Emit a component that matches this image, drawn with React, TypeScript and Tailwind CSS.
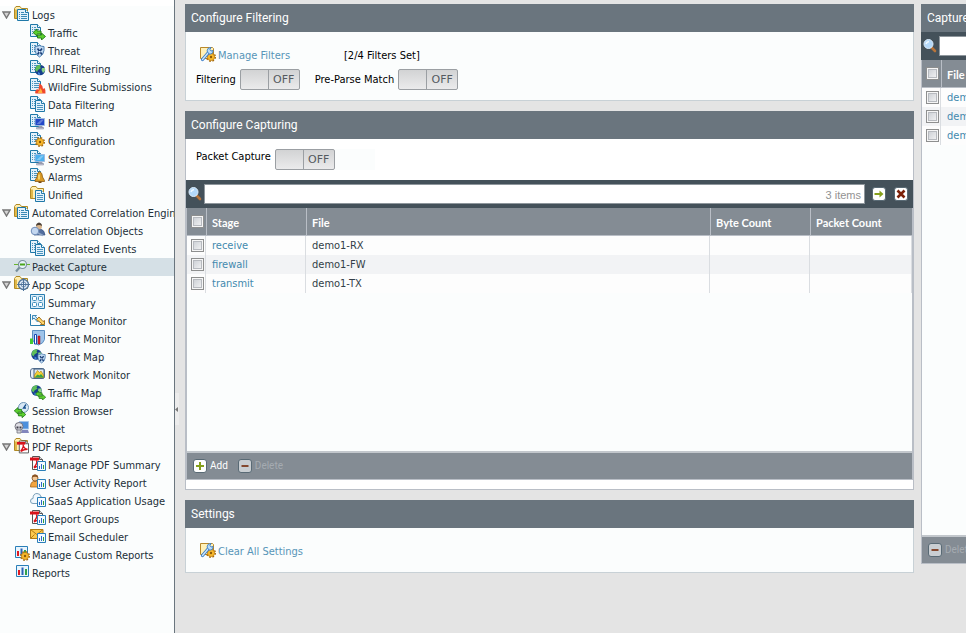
import { useState, type ReactNode } from "react";

const bodyFont = "font-['DejaVu_Sans_Condensed','DejaVu_Sans',sans-serif]";
const titleFont = "font-['Roboto',sans-serif]";

/* ---------- icon parts, all drawn on a 16x16 grid ---------- */

const BackDoc = () => (
  <g>
    <path d="M.5 .5h7l3 3v9h-10z" fill="#e3f1fa" stroke="#1f78a8" />
    <path d="M7.5 .5v3h3" fill="#fff" stroke="#1f78a8" />
    <path d="M2 3.500h1M4 3.500h2M2 5.500h1M4 5.500h5M2 7.500h1M4 7.500h5M2 9.500h1M4 9.500h5" stroke="#4a94be" />
  </g>
);

const FrontDoc = () => (
  <g>
    <path d="M5.500 4.500h6l3 3v8h-9z" fill="#e3f1fb" stroke="#1f78a8" />
    <path d="M11.500 4.500v3h3" fill="#fff" stroke="#1f78a8" />
    <path d="M7 7.500h3M7 9.500h6M7 11.500h6M7 13.500h6" stroke="#4a94be" />
  </g>
);

const Folder = () => (
  <g>
    <path d="M.5 12.500v-10l1.500-2h4l1.500 2h6v10z" fill="#ffeeb0" stroke="#b08a25" />
    <path d="M2 12V3.500" stroke="#e0b84a" strokeWidth="2" />
  </g>
);

const WideDoc = () => (
  <g>
    <path d="M3.500 3.500h8l3 3v8h-11z" fill="#e3f1fb" stroke="#1f78a8" />
    <path d="M11.500 3.500v3h3" fill="#fff" stroke="#1f78a8" />
    <path d="M5 6.500h1M7 6.500h3M5 8.500h1M7 8.500h6M5 10.500h1M7 10.500h6M5 12.500h1M7 12.500h6" stroke="#3b8ab5" />
  </g>
);

const GreenArrows = () => (
  <g fill="#5ccf2f" stroke="#217a16" strokeWidth=".9">
    <path d="M3 8.500l4-3.500v2h4v3H7v2z" />
    <path d="M15.500 12.500l-4-3.500v2h-4v3h4v2z" />
  </g>
);

const Shield = () => (
  <g>
    <path d="M5 4.500q2.500 0 4.500-1 2 1 4.500 1v4q-.5 4.500-4.500 6.500-4-2-4.500-6.500z" fill="#c2dbf3" stroke="#4d7fb0" />
    <path d="M7.500 6.500l4.500 6M12 6.500l-4.500 6" stroke="#1b3f78" strokeWidth="1.700" />
    <path d="M9 9h1.500v1.500H9z" fill="#eaf4ff" />
  </g>
);

const Globe = () => (
  <g>
    <circle cx="10" cy="10" r="5.200" fill="#173f8c" />
    <path d="M6 6.500q3-2.500 5-1.500l-1 2 1 1-3 2-1 2-2-2z" fill="#5fbf58" />
    <path d="M12 8l3 0v3l-2 2-1.500-3z" fill="#8bd487" />
    <path d="M8 12l2 1v2l-2-.5z" fill="#3d83d8" />
  </g>
);

const Flame = () => (
  <g>
    <path d="M5 14q1-2 2-3l1.500 1 1-7q3 2 3.500 6l1.500-1q1.500 2 1 5.500H5.500z" fill="#f0482c" />
    <path d="M8 15q0-2 1.500-2.500l.5-2.500q2.500 2 2.500 5z" fill="#ffb13b" />
  </g>
);

const Monitor = ({ color }: { color: string }) => (
  <g>
    <path d="M5 4.500h9.500v7H5z" fill={color} stroke="#9dbbe0" />
    <path d="M9 12h3l1.500 2h-6z" fill="#9a9cb0" />
    <path d="M6.500 13.500h7v1.500h-7z" fill="#c5c8d8" stroke="#7e8298" strokeWidth=".5" />
    <path d="M6.500 10l5-4.500h2.500L10 10z" fill="#fff" opacity=".3" />
  </g>
);

const Gear = () => (
  <g>
    <circle cx="10" cy="10" r="4.200" fill="none" stroke="#a56a0c" strokeWidth="1.600" strokeDasharray="1.700 1.600" />
    <circle cx="10" cy="10" r="3.600" fill="#f9b92c" stroke="#b9770f" strokeWidth=".7" />
    <circle cx="10" cy="10" r="1.200" fill="#8d5a08" />
  </g>
);

const Bell = () => (
  <g>
    <path d="M9.500 3.500q3 1 3 5.500l2 3.500v1H5v-1L7 9q0-4.500 2.500-5.500z" fill="#d99a25" stroke="#8c5a12" strokeWidth=".8" />
    <path d="M9 6.500v5" stroke="#ffe07d" strokeWidth="1.500" />
    <path d="M8.500 13.500h3V15h-3z" fill="#7b4a0d" />
  </g>
);

const PdfPage = () => (
  <g>
    <path d="M2.500 .5h7l3 3v10h-10z" fill="#fff" stroke="#555" />
    <path d="M9.500 .5v3h3" fill="#ddd" stroke="#555" />
    <path d="M0 1.500h9v3H0z" fill="#d8121b" />
    <path d="M4 11.500q4-5 2.500-7 1 5 5 5-4 0-7.500 2.500" fill="none" stroke="#d8121b" strokeWidth="1.500" />
  </g>
);

const MiniChart = () => (
  <g>
    <path d="M7.500 5.500h8v9h-8z" fill="#f4faff" stroke="#2a7fb8" />
    <path d="M9.500 13v-3" stroke="#2b69c9" />
    <path d="M11.500 13V8" stroke="#2b69c9" />
    <path d="M13.500 13V9" stroke="#2f9e3f" />
  </g>
);

const ChartFrame = () => (
  <g>
    <path d="M1.500 2.500h12v11h-12z" fill="#e9f5fd" stroke="#2a7fb8" />
    <path d="M3 7h2v5H3z" fill="#e01b22" />
    <path d="M6.500 4.500h2V12h-2z" fill="#2b62b5" />
    <path d="M10 6h2v6h-2z" fill="#34a348" />
  </g>
);

const icons: Record<string, ReactNode> = {
  logs: <><Folder /><WideDoc /></>,
  traffic: <><BackDoc /><GreenArrows /></>,
  threat: <><BackDoc /><Shield /></>,
  url: <><BackDoc /><Globe /></>,
  wildfire: <><BackDoc /><Flame /></>,
  data: <><BackDoc /><FrontDoc /></>,
  hip: <><BackDoc /><Monitor color="#2348c8" /></>,
  config: <><BackDoc /><Gear /></>,
  system: <><BackDoc /><Monitor color="#4bb0ee" /></>,
  alarms: <><BackDoc /><Bell /></>,
  unified: <><Folder /><FrontDoc /></>,
  objects: (
    <>
      <path d="M4 13q0-5 3.500-6h3q4 1 4.500 6z" fill="#536f9f" stroke="#3a5482" strokeWidth=".7" />
      <circle cx="9" cy="4.500" r="3" fill="#d8b68e" />
      <path d="M6 4q0-3 3-3.500 3 .5 3 3.500-3-2-6 0z" fill="#4b4038" />
      <circle cx="5" cy="9" r="3.800" fill="#c3d7f0" stroke="#6f8cb8" />
      <path d="M8 11l5 2.500" stroke="#8fa5c5" strokeWidth="1.800" />
    </>
  ),
  capture: (
    <>
      <path d="M0 6.500h16" stroke="#67b52d" />
      <circle cx="8.500" cy="6.500" r="4" fill="#e8f3fb" stroke="#7a8f9c" strokeWidth="1.200" />
      <path d="M6 5.500h5v2H6z" fill="#4aa51c" />
      <path d="M5.500 9.500L2 13.500" stroke="#78909c" strokeWidth="2.200" />
    </>
  ),
  scope: (
    <>
      <Folder />
      <circle cx="9.500" cy="8.500" r="5" fill="#e2edf8" stroke="#4e7299" strokeWidth="1.300" />
      <circle cx="9.500" cy="8.500" r="2.500" fill="none" stroke="#6c8bb0" />
      <path d="M9.500 2v13M3 8.500h13" stroke="#4e7299" />
    </>
  ),
  summary: (
    <>
      <path d="M.5 .5h14v14H.5z" fill="#dceefa" stroke="#2a7dae" />
      <g fill="#fff" stroke="#3c8dba">
        <rect x="2.500" y="2.500" width="4" height="4" rx="1" />
        <rect x="8.500" y="2.500" width="4" height="4" rx="1" />
        <rect x="2.500" y="8.500" width="4" height="4" rx="1" />
        <rect x="8.500" y="8.500" width="4" height="4" rx="1" />
      </g>
    </>
  ),
  change: (
    <>
      <path d="M.5 2v11.500H15" fill="none" stroke="#2a7dae" />
      <path d="M2.500 3.500h4l-1 1 3.500 4-1.500 1.500-3.500-4-1.500 1.500z" fill="#d4ebfa" stroke="#2a7dae" strokeWidth=".9" />
      <path d="M6.500 7.500L9 5l4 4.500 1.500-1v4h-4l1-1.200z" fill="#ffd66c" stroke="#97640e" strokeWidth=".9" />
    </>
  ),
  threatMonitor: (
    <>
      <path d="M2.500 .5h12v9q-1 4-6 5.500-5-1.500-6-5.500z" fill="#9ec4ea" stroke="#5b8fc2" />
      <path d="M0 8.500h3V14H0z" fill="#43c934" />
      <path d="M4.500 4.500h2V14h-2z" fill="#fff" stroke="#1748b4" />
      <path d="M8 6h2v8H8z" fill="#e0202a" stroke="#97101a" strokeWidth=".5" />
    </>
  ),
  threatMap: (
    <>
      <g transform="translate(-3.500 -3.500)"><Globe /></g>
      <g transform="translate(4 3) scale(.8)"><Shield /></g>
    </>
  ),
  network: (
    <>
      <rect x=".5" y="2.500" width="14" height="10" rx="2.500" fill="#e8edf4" stroke="#5b7492" />
      <path d="M4 3h10v9H4z" fill="#dfe8f2" stroke="#3f5d80" />
      <path d="M4.500 9l3-4.500 2 2 1.500-1.500 2.500 4v2.500h-9z" fill="#f5cf36" stroke="#a77c12" strokeWidth=".6" />
      <path d="M4.500 11.500l3-3 2 1 1.500-1.500 2.500 3v.5z" fill="#3aa543" />
    </>
  ),
  trafficMap: (
    <>
      <g transform="translate(-3.500 -3.500)"><Globe /></g>
      <g transform="translate(3 3) scale(.82)"><GreenArrows /></g>
    </>
  ),
  session: (
    <>
      <circle cx="9.500" cy="5.500" r="5" fill="#d7e8f5" stroke="#6d94b5" />
      <path d="M12 2.500L9.500 6h2.500" fill="none" stroke="#17508e" strokeWidth="1.300" />
      <g transform="translate(-2.500 1) scale(.92)"><GreenArrows /></g>
    </>
  ),
  botnet: (
    <>
      <path d="M5.500 1.500h9v7.500h-9z" fill="#4c8fdc" stroke="#a3c3e8" />
      <path d="M8 10h6l1 3H7z" fill="#8286bd" />
      <circle cx="5" cy="6.500" r="4" fill="#dedee4" stroke="#74747e" />
      <path d="M3 10h4v3H3z" fill="#d6d6dc" stroke="#74747e" strokeWidth=".8" />
      <path d="M2.500 6.500h2v2h-2zM5.500 6.500h2v2h-2z" fill="#3c3c48" />
    </>
  ),
  pdf: <><Folder /><g transform="translate(3 2.500) scale(.92)"><PdfPage /></g></>,
  pdfSummary: <><PdfPage /><MiniChart /></>,
  user: (
    <>
      <path d="M.5 13q0-5 3-5.500h3q3 .5 3 5.500z" fill="#f2a541" stroke="#a86415" strokeWidth=".8" />
      <circle cx="5" cy="4" r="3" fill="#f3c998" stroke="#7a4a1c" strokeWidth=".8" />
      <path d="M2 3.500Q2 .5 5 .5t3 3q-3-1.500-6 0z" fill="#8b5423" />
      <MiniChart />
    </>
  ),
  saas: (
    <>
      <path d="M3 11.500Q.5 11.500.5 9T3 6.500Q3 1.500 7 1.500q3.500 0 4 3.500 3 0 3 3t-2.500 3.500z" fill="#f1f8fd" stroke="#7ba0b8" />
      <MiniChart />
    </>
  ),
  email: (
    <>
      <path d="M.5 1.500h12.500v9H.5z" fill="#fdc94d" stroke="#b37c16" />
      <path d="M.5 1.500l6.300 5 6.200-5M.5 10.500l4-4" fill="none" stroke="#b37c16" />
      <MiniChart />
    </>
  ),
  custom: <><g transform="translate(0 -2)"><ChartFrame /></g><g transform="translate(1 0)"><Gear /></g></>,
  reports: <g transform="translate(1 -1)"><ChartFrame /></g>,
};

function Icon({ name }: { name: string }) {
  return (
    <svg className="size-4 shrink-0" viewBox="0 0 16 16" aria-hidden="true">
      {icons[name]}
    </svg>
  );
}

const ManageIcon = () => (
  <svg className="size-4 shrink-0" viewBox="0 0 16 16" aria-hidden="true">
    <path d="M.5 12.500v-11h12l1 1v10z" fill="#fff1b8" stroke="#b8882a" />
    <g transform="translate(1 1)"><Gear /></g>
    <path d="M2.500 13.500l6-7" stroke="#3c7fc8" strokeWidth="3.200" strokeLinecap="round" />
    <path d="M2.500 13.500l6-7" stroke="#cfe7fb" strokeWidth="1.300" strokeLinecap="round" />
    <path d="M7 5q0-3.500 4-3.500l-1 2 1 1.500 2-.5q0 4-4 3.500z" fill="#b9dcf8" stroke="#3c7fc8" strokeWidth=".9" />
  </svg>
);

const SearchIcon = () => (
  <svg className="mx-0.5 size-[14px] shrink-0" viewBox="0 0 14 14" aria-hidden="true">
    <path d="M8.500 8.500l3.500 3.500" stroke="#b8743b" strokeWidth="2.600" strokeLinecap="round" />
    <circle cx="5.500" cy="5" r="4.500" fill="#b3d8f9" stroke="#dcecfb" />
    <path d="M3 5q.5-2 3-2.500" stroke="#eef8ff" fill="none" strokeWidth="1.500" />
  </svg>
);

const SquareIcon = ({ kind }: { kind: "add" | "delete" | "go" | "clear" }) => (
  <svg className="size-[14px] shrink-0" viewBox="0 0 14 14" aria-hidden="true">
    <rect x=".5" y=".5" width="13" height="13" rx="2.500" fill={kind === "delete" ? "#c9ced2" : "#fff"} stroke="#596a75" />
    {kind === "add" && <path d="M7 3v8M3 7h8" stroke="#86a01c" strokeWidth="2" />}
    {kind === "delete" && <path d="M3.500 7h7" stroke="#84482f" strokeWidth="2" />}
    {kind === "go" && <path d="M2.500 6h5V3.500L11.500 7l-4 3.500V8h-5z" fill="#86a01c" />}
    {kind === "clear" && <path d="M3.500 3.500l7 7M10.500 3.500l-7 7" stroke="#7c2008" strokeWidth="2.600" />}
  </svg>
);

/* ---------- navigation ---------- */

type NavItem = { label: string; icon: string; children?: NavItem[] };

const nav: NavItem[] = [
  {
    label: "Logs",
    icon: "logs",
    children: [
      { label: "Traffic", icon: "traffic" },
      { label: "Threat", icon: "threat" },
      { label: "URL Filtering", icon: "url" },
      { label: "WildFire Submissions", icon: "wildfire" },
      { label: "Data Filtering", icon: "data" },
      { label: "HIP Match", icon: "hip" },
      { label: "Configuration", icon: "config" },
      { label: "System", icon: "system" },
      { label: "Alarms", icon: "alarms" },
      { label: "Unified", icon: "unified" },
    ],
  },
  {
    label: "Automated Correlation Engine",
    icon: "logs",
    children: [
      { label: "Correlation Objects", icon: "objects" },
      { label: "Correlated Events", icon: "data" },
    ],
  },
  { label: "Packet Capture", icon: "capture" },
  {
    label: "App Scope",
    icon: "scope",
    children: [
      { label: "Summary", icon: "summary" },
      { label: "Change Monitor", icon: "change" },
      { label: "Threat Monitor", icon: "threatMonitor" },
      { label: "Threat Map", icon: "threatMap" },
      { label: "Network Monitor", icon: "network" },
      { label: "Traffic Map", icon: "trafficMap" },
    ],
  },
  { label: "Session Browser", icon: "session" },
  { label: "Botnet", icon: "botnet" },
  {
    label: "PDF Reports",
    icon: "pdf",
    children: [
      { label: "Manage PDF Summary", icon: "pdfSummary" },
      { label: "User Activity Report", icon: "user" },
      { label: "SaaS Application Usage", icon: "saas" },
      { label: "Report Groups", icon: "pdfSummary" },
      { label: "Email Scheduler", icon: "email" },
    ],
  },
  { label: "Manage Custom Reports", icon: "custom" },
  { label: "Reports", icon: "reports" },
];

function NavLink({ item }: { item: NavItem }) {
  return (
    <a href="#" className="flex gap-0.5 whitespace-nowrap">
      <Icon name={item.icon} />
      {item.label}
    </a>
  );
}

function NavNode({ item, active, onSelect }: { item: NavItem; active: string; onSelect: (label: string) => void }) {
  const [open, setOpen] = useState(true);

  return (
    <li>
      <div
        className={active === item.label ? "flex h-[18px] bg-[#d5e0e6]" : "flex h-[18px]"}
        onClick={() => onSelect(item.label)}
      >
        <span className="w-[14px] shrink-0 pl-0.5">
          {item.children && (
            <button aria-label={`Toggle ${item.label}`} className="block pt-[5px]" onClick={() => setOpen(!open)}>
              <svg className="h-2 w-[9px]" viewBox="0 0 9 8">
                <path d="M1 1h7L4.500 7z" fill="#d4d4d4" stroke="#777" strokeWidth="1.400" />
              </svg>
            </button>
          )}
        </span>
        <NavLink item={item} />
      </div>
      {item.children && open && (
        <ul>
          {item.children.map((child) => (
            <li
              key={child.label}
              className={active === child.label ? "h-[18px] bg-[#d5e0e6] pl-[30px]" : "h-[18px] pl-[30px]"}
              onClick={() => onSelect(child.label)}
            >
              <NavLink item={child} />
            </li>
          ))}
        </ul>
      )}
    </li>
  );
}

/* ---------- controls ---------- */

function Toggle({ id, label, className = "items-center" }: { id: string; label: string; className?: string }) {
  const [on, setOn] = useState(false);

  return (
    <div className={`flex gap-1 ${className}`}>
      <label htmlFor={id} className="pt-px">{label}</label>
      <button
        id={id}
        role="switch"
        aria-checked={on}
        onClick={() => setOn(!on)}
        className="flex h-[21px] w-[60px] rounded-[2px] border border-[#9b9fa3] bg-linear-to-b from-[#d2d3d4] to-[#ebebec] font-['DejaVu_Sans',sans-serif] text-[11px] leading-[19px] text-[#555a60]"
      >
        <span className="h-full w-7 border-r border-[#9b9fa3]" />
        <span className="flex-1">{on ? "ON" : "OFF"}</span>
      </button>
    </div>
  );
}

function Check({ label }: { label: string }) {
  return (
    <input
      type="checkbox"
      aria-label={label}
      className="ml-1 block size-[13px] appearance-none border border-[#8e8f8f] bg-linear-to-br from-[#c6cad0] to-[#f8f8f8] shadow-[inset_0_0_0_1px_#f6f6f6,inset_0_0_0_2px_#b7babf] checked:bg-[#5c93b5]"
    />
  );
}

function PanelTitle({ children }: { children: ReactNode }) {
  return (
    <h2 className={`h-7 bg-[#6a757e] pl-1.5 text-[12px] leading-[29px] whitespace-nowrap text-white ${titleFont}`}>
      {children}
    </h2>
  );
}

function SearchBar({ count }: { count?: string }) {
  return (
    <div className="flex h-7 items-center bg-[#44515a]">
      <SearchIcon />
      <div className="flex h-5 min-w-0 flex-1 items-center border border-[#8f979d] bg-white pr-[3px] font-['Liberation_Sans',sans-serif] text-[11px] text-[#929292]">
        <input aria-label="Search" className="h-full min-w-0 flex-1 px-1 text-black outline-none" />
        {count && <span className="pt-0.5">{count}</span>}
      </div>
      {count && (
        <div className="flex gap-2 pr-[5px] pl-[7px]">
          <button aria-label="Apply"><SquareIcon kind="go" /></button>
          <button aria-label="Clear"><SquareIcon kind="clear" /></button>
        </div>
      )}
    </div>
  );
}

const th = "h-7 border-b border-l border-[#b9bec6] bg-[#848c94] px-[5px] pt-0.5 text-left font-['Lato',sans-serif] text-[11px] font-bold text-white";
const td = "h-[19px] border-r border-[#dadde1] px-1.5 pt-px leading-[18px]";

const stages = [
  { stage: "receive", file: "demo1-RX" },
  { stage: "firewall", file: "demo1-FW" },
  { stage: "transmit", file: "demo1-TX" },
];

export default function App() {
  const [active, setActive] = useState("Packet Capture");

  return (
    <div className={`flex h-screen min-h-[580px] overflow-hidden bg-[#e4e4e4] text-[11px] leading-5 text-black ${bodyFont}`}>
      <nav className="w-[175px] shrink-0 overflow-hidden border-r border-[#6a757e] bg-white pt-1.5 text-[#222f38]">
        <ul className="h-full bg-[#fbfdfd]">
          {nav.map((item) => (
            <NavNode key={item.label} item={item} active={active} onSelect={setActive} />
          ))}
        </ul>
      </nav>

      <div className="w-2.5 shrink-0">
        <button aria-label="Collapse navigation" className="mt-[393px] flex h-8 w-1 items-center bg-[#ececec]">
          <svg className="h-[5px] w-[3px]" viewBox="0 0 3 5"><path d="M3 0v5L0 2.500z" fill="#777" /></svg>
        </button>
      </div>

      <main className="flex min-w-0 flex-1 flex-col gap-2.5 pt-1">
        <section>
          <PanelTitle>Configure Filtering</PanelTitle>
          <div className="border border-t-0 border-[#c8d1d6] bg-[#fbfdfd] pt-3.5 pb-2.5">
            <div className="flex items-center pl-3.5">
              <a href="#" className="flex w-36 gap-0.5 text-[#5795b8]">
                <ManageIcon />
                Manage Filters
              </a>
              <span>[2/4 Filters Set]</span>
            </div>
            <div className="flex gap-[15px] pt-[3px] pl-2.5">
              <Toggle id="filtering" label="Filtering" />
              <Toggle id="pre-parse" label="Pre-Parse Match" />
            </div>
          </div>
        </section>

        <section>
          <PanelTitle>Configure Capturing</PanelTitle>
          <div className="border border-t-0 border-[#b9bec6] bg-white pb-[9px]">
            <div className="flex h-[41px] items-center pl-2.5">
              <Toggle id="capture" label="Packet Capture" className="items-start leading-[14px]" />
              <span className="h-[21px] w-10 bg-[#fbfdfd]" />
            </div>
            <SearchBar count="3 items" />
            <div className="border-x border-b border-[#b9bec6] bg-[#fbfdfd]">
              <div className="h-[243px]">
                <table className="w-full table-fixed border-separate border-spacing-0">
                  <colgroup>
                    <col className="w-[19px]" />
                    <col className="w-[100px]" />
                    <col />
                    <col className="w-[100px]" />
                    <col className="w-[102px]" />
                  </colgroup>
                  <thead>
                    <tr>
                      <th className="h-7 border-b border-[#b9bec6] bg-[#848c94]"><Check label="Select all stages" /></th>
                      <th className={th}>Stage</th>
                      <th className={th}>File</th>
                      <th className={th}>Byte Count</th>
                      <th className={th}>Packet Count</th>
                    </tr>
                  </thead>
                  <tbody className="text-[#333e48]">
                    {stages.map((row) => (
                      <tr key={row.stage} className="bg-[#fdfdfd] even:bg-[#f2f3f5]">
                        <td className="h-[19px] border-r border-[#dadde1]"><Check label={`Select ${row.stage}`} /></td>
                        <td className={td}><a href="#" className="text-[#4389ae]">{row.stage}</a></td>
                        <td className={td}>{row.file}</td>
                        <td className={td} />
                        <td className={td} />
                      </tr>
                    ))}
                  </tbody>
                </table>
              </div>
              <div className={`flex h-7 items-center gap-2.5 border-t-2 border-[#c2c7cc] bg-[#848c94] pl-1.5 text-[10px] ${titleFont}`}>
                <button className="flex items-center gap-[3px] text-white"><SquareIcon kind="add" />Add</button>
                <button disabled className="flex items-center gap-[3px] text-[#a5abb1]"><SquareIcon kind="delete" />Delete</button>
              </div>
            </div>
          </div>
        </section>

        <section>
          <PanelTitle>Settings</PanelTitle>
          <div className="border border-t-0 border-[#c8d1d6] bg-[#fbfdfd] pt-3.5 pb-2.5 pl-3.5">
            <a href="#" className="flex gap-0.5 text-[#5795b8]">
              <ManageIcon />
              Clear All Settings
            </a>
          </div>
        </section>
      </main>

      {/* continues past the right edge of the viewport */}
      <aside className="ml-[7px] w-[45px] shrink-0 overflow-hidden pt-1">
        <section className="w-[300px]">
          <PanelTitle>Captured Files</PanelTitle>
          <SearchBar />
          <div className="border border-t-0 border-[#b9bec6] bg-[#fbfdfd]">
            <div className="h-[475px]">
              <table className="w-full table-fixed border-separate border-spacing-0">
                <colgroup>
                  <col className="w-[19px]" />
                  <col />
                </colgroup>
                <thead>
                  <tr>
                    <th className="h-7 border-b border-[#b9bec6] bg-[#848c94]"><Check label="Select all files" /></th>
                    <th className={th}>File</th>
                  </tr>
                </thead>
                <tbody>
                  {stages.map((row) => (
                    <tr key={row.file} className="bg-[#fdfdfd] even:bg-[#f2f3f5]">
                      <td className="h-[19px] border-r border-[#dadde1]"><Check label={`Select ${row.file}`} /></td>
                      <td className={td}><a href="#" className="text-[#4389ae]">{row.file}</a></td>
                    </tr>
                  ))}
                </tbody>
              </table>
            </div>
            <div className={`flex h-7 items-center border-t-2 border-[#c2c7cc] bg-[#848c94] pl-1.5 text-[10px] ${titleFont}`}>
              <button disabled className="flex items-center gap-[3px] text-[#a5abb1]"><SquareIcon kind="delete" />Delete</button>
            </div>
          </div>
        </section>
      </aside>
    </div>
  );
}
